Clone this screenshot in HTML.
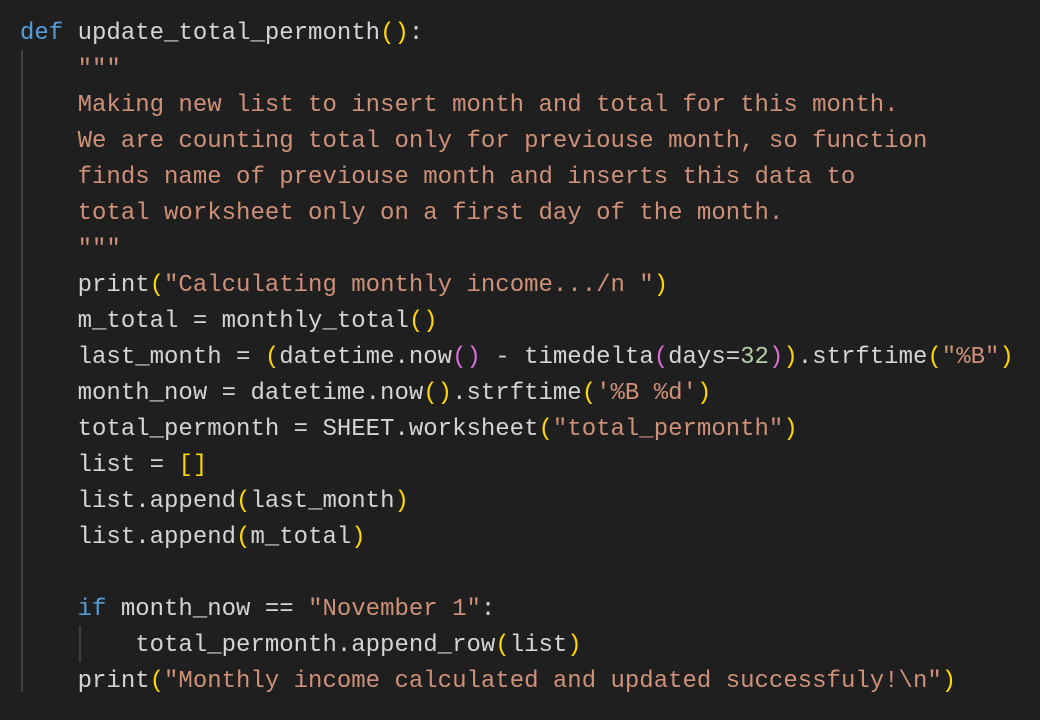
<!DOCTYPE html>
<html><head><style>
html,body{margin:0;padding:0;background:#1f1f1f;width:1040px;height:720px;overflow:hidden}
pre{margin:0;position:absolute;left:20px;top:16px;font-family:"Liberation Mono",monospace;font-size:24px;line-height:36px;color:#d4d4d4;white-space:pre}
.k{color:#569cd6}.s{color:#ce9178}.y{color:#ffd700}.p{color:#da70d6}.n{color:#b5cea8}.f{color:#dcdcaa}
.g{position:absolute;width:2px;background:#404040}
</style></head><body>
<div class="g" style="left:21px;top:50px;height:642px"></div>
<div class="g" style="left:79px;top:626px;height:36px"></div>
<pre><span class="k">def</span> update_total_permonth<span class="y">()</span>:
    <span class="s">"""</span>
<span class="s">    Making new list to insert month and total for this month.</span>
<span class="s">    We are counting total only for previouse month, so function</span>
<span class="s">    finds name of previouse month and inserts this data to</span>
<span class="s">    total worksheet only on a first day of the month.</span>
<span class="s">    """</span>
    print<span class="y">(</span><span class="s">"Calculating monthly income.../n "</span><span class="y">)</span>
    m_total = monthly_total<span class="y">()</span>
    last_month = <span class="y">(</span>datetime.now<span class="p">()</span> - timedelta<span class="p">(</span>days=<span class="n">32</span><span class="p">)</span><span class="y">)</span>.strftime<span class="y">(</span><span class="s">"%B"</span><span class="y">)</span>
    month_now = datetime.now<span class="y">()</span>.strftime<span class="y">(</span><span class="s">'%B %d'</span><span class="y">)</span>
    total_permonth = SHEET.worksheet<span class="y">(</span><span class="s">"total_permonth"</span><span class="y">)</span>
    list = <span class="y">[]</span>
    list.append<span class="y">(</span>last_month<span class="y">)</span>
    list.append<span class="y">(</span>m_total<span class="y">)</span>

    <span class="k">if</span> month_now == <span class="s">"November 1"</span>:
        total_permonth.append_row<span class="y">(</span>list<span class="y">)</span>
    print<span class="y">(</span><span class="s">"Monthly income calculated and updated successfuly!\n"</span><span class="y">)</span></pre>
</body></html>
